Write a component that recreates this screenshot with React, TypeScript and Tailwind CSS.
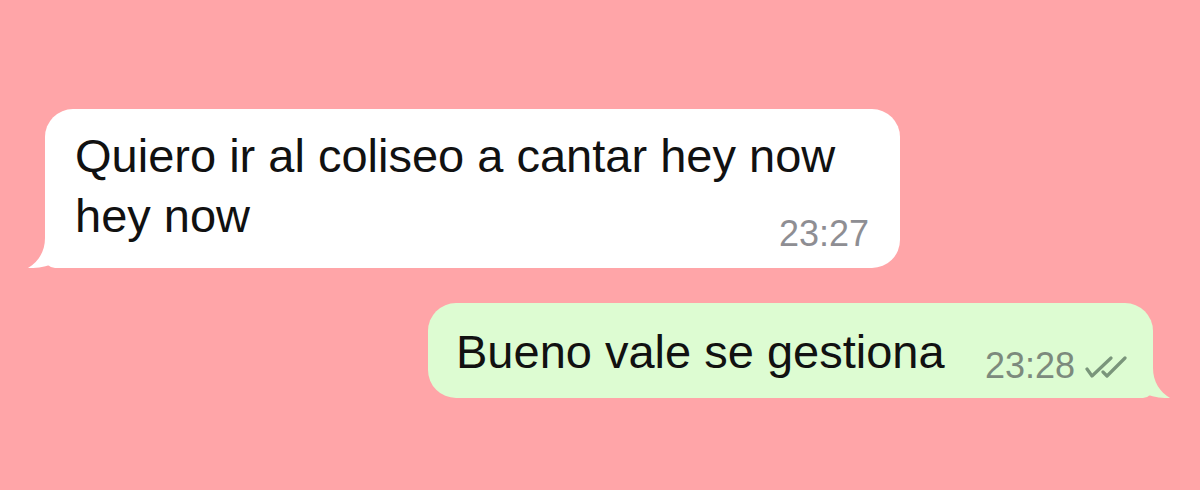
import React from "react";

function Tail({ fill, flip }: { fill: string; flip?: boolean }) {
  return (
    <svg
      viewBox="0 0 50 50"
      className={`absolute bottom-0 w-[50px] h-[50px] ${flip ? "right-[-20px] -scale-x-100" : "left-[-20px]"}`}
    >
      <path
        d="M20,0 L20,20 C20,34 13,44 3,50 C13,50.5 23,48 32,44.5 C36,48 41,50 48,50 L50,50 L50,0 Z"
        fill={fill}
      />
    </svg>
  );
}

function DoubleCheck() {
  return (
    <svg viewBox="0 0 44 24" className="w-[44px] h-[24px]" fill="none">
      <g stroke="#7a957b" strokeWidth="3.2" strokeLinecap="round" strokeLinejoin="round">
        <path d="M3,13 L8,20 L27,2" />
        <path d="M19,16 L23,20 L41,2" />
      </g>
    </svg>
  );
}

export default function App() {
  return (
    <div
      className="w-[1200px] h-[490px] bg-[#ffa5a8] flex flex-col pt-[109px] gap-[35px] overflow-hidden"
      style={{ fontFamily: '"Liberation Sans", Arial, sans-serif' }}
    >
      {/* Incoming message */}
      <div className="relative ml-[45px] w-[855px] h-[159px] bg-white rounded-[28px] rounded-bl-[10px] flex flex-col pl-[30px] pr-[31px] pt-[17px] text-[#111111]">
        <Tail fill="#ffffff" />
        <span className="relative w-fit text-[47px] leading-[60px]">Quiero ir al coliseo a cantar hey now</span>
        <div className="relative flex justify-between items-start">
          <span className="text-[47px] leading-[60px]">hey now</span>
          <span className="mt-[30px] text-[36px] leading-none text-[#8e8e93]">23:27</span>
        </div>
      </div>

      {/* Outgoing message */}
      <div className="relative self-end mr-[47px] w-[725px] h-[95px] bg-[#ddfcd2] rounded-[28px] rounded-br-[10px] flex items-end pl-[28px] pr-[25px] pb-[16px]">
        <Tail fill="#ddfcd2" flip />
        <p className="relative text-[47px] leading-[60px] text-[#111111]">Bueno vale se gestiona</p>
        <div className="relative ml-auto flex items-end gap-[9px] mb-[-2px]">
          <span className="text-[36px] leading-none text-[#7c8a7d]">23:28</span>
          <div className="mb-[4px]">
            <DoubleCheck />
          </div>
        </div>
      </div>
    </div>
  );
}
